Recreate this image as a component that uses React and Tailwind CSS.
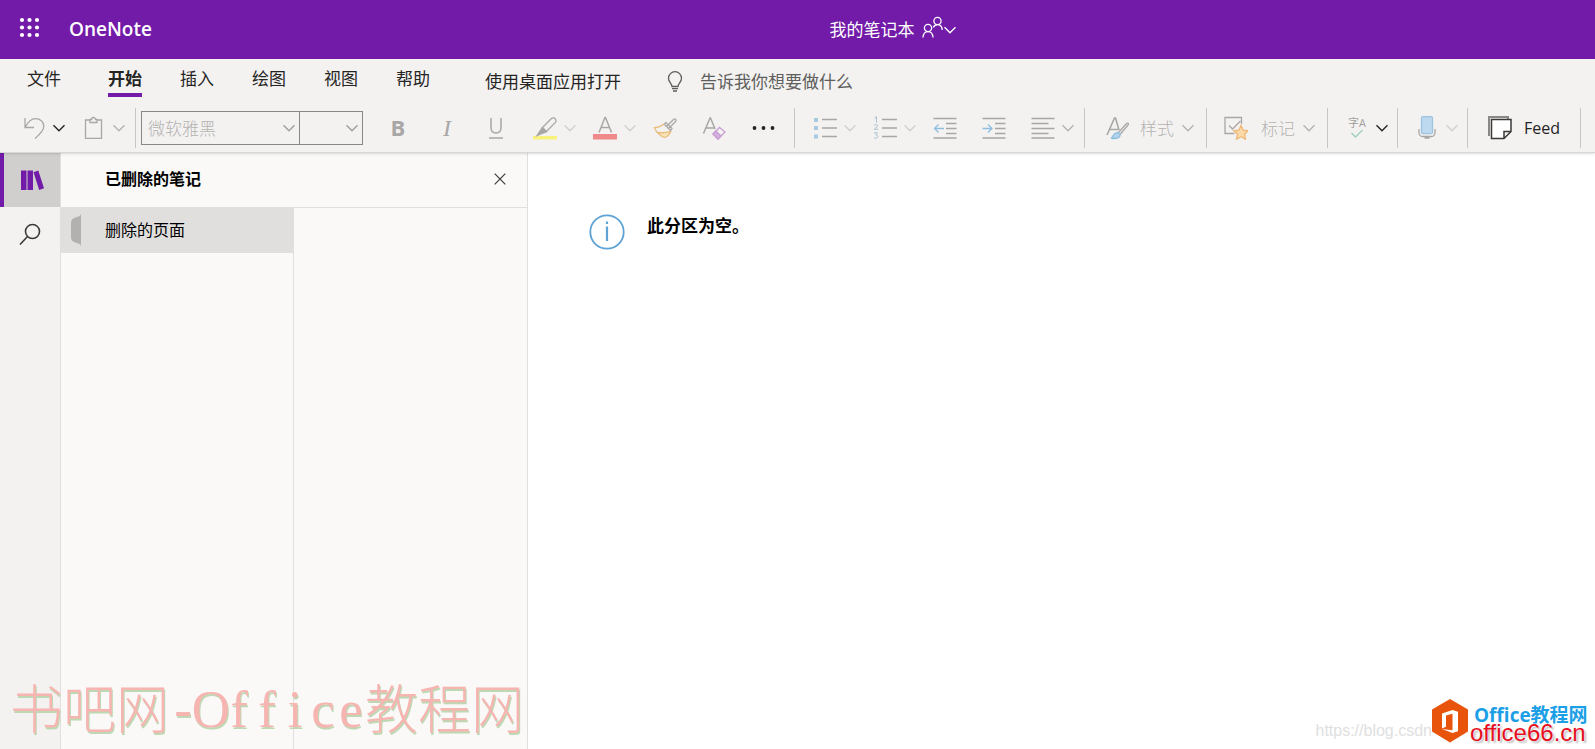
import React from 'react';

const Chevron = ({ className = 'text-[#b5b3b1]' }) => (
  <svg viewBox="0 0 12 12" className={`w-3 h-3 shrink-0 ${className}`} fill="none" stroke="currentColor" strokeWidth="1.4">
    <path d="M0.5 3.2 6 8.7 11.5 3.2" />
  </svg>
);

const Icon = ({ children, className = 'text-[#a9a7a5]' }) => (
  <svg viewBox="0 0 24 24" className={`w-6 h-6 shrink-0 ${className}`} fill="none" stroke="currentColor" strokeWidth="1.3">
    {children}
  </svg>
);

const Tool = ({ label, chevron, chevronClass, children }) => (
  <button type="button" aria-label={label} className={`flex items-center gap-[7px] h-10 ${chevron ? '-mr-2' : ''}`}>
    {children}
    {chevron && <Chevron className={chevronClass} />}
  </button>
);

const Divider = () => <div className="w-px h-10 bg-[#c8c6c4] shrink-0" />;

const Combo = ({ label, value, className }) => (
  <div className={`relative ${className}`}>
    <select aria-label={label} className="appearance-none w-full h-full pl-1.5 pt-0.5 text-[17px] font-light text-[#b5b3b1] outline-none">
      <option>{value}</option>
    </select>
    <div className="absolute right-1 top-0 h-full flex items-center pointer-events-none">
      <Chevron className="text-[#a19f9d]" />
    </div>
  </div>
);

const tabs = [
  { name: '开始', active: true },
  { name: '插入' },
  { name: '绘图' },
  { name: '视图' },
  { name: '帮助' },
];

const Header = () => (
  <header className="flex items-center h-[59px] bg-[#731ba9] text-white">
    <div className="w-[52%] flex items-center pl-[19px] gap-7">
      <button type="button" aria-label="应用启动器" className="-mt-1">
        <svg viewBox="0 0 22 22" className="w-[22px] h-[22px]" fill="currentColor">
          {[3, 10.5, 18].map((y) => [3, 10.5, 18].map((x) => <circle key={`${x}-${y}`} cx={x} cy={y} r="2.1" />))}
        </svg>
      </button>
      <span className="text-[19px] font-semibold">OneNote</span>
    </div>
    <button type="button" className="flex items-center text-[17px]">
      我的笔记本
      <svg viewBox="0 0 22 24" className="w-[22px] h-6 ml-2 -mt-1" fill="none" stroke="currentColor" strokeWidth="1.3">
        <circle cx="6" cy="12" r="3.6" />
        <path d="M1 21.500c.2-3.600 2.200-5.900 5-5.900s4.800 2.300 5 5.900" />
        <circle cx="15.500" cy="5" r="3.600" />
        <path d="M11.300 11.500c.8-1.800 2.200-2.900 4.200-2.900 2.700 0 4.500 2.200 4.800 5.400" />
      </svg>
      <Chevron className="text-white" />
    </button>
  </header>
);

const RibbonTabs = () => (
  <nav className="flex items-start pt-1.5 h-11 text-[17px] text-[#252423]">
    <button type="button" className="ml-[27px] mr-[47px] h-7">文件</button>
    <div className="flex gap-[38px]">
      {tabs.map((tab) => (
        <button
          key={tab.name}
          type="button"
          className={tab.active ? 'h-8 font-bold border-b-4 border-[#731ba9]' : 'h-7'}
        >
          {tab.name}
        </button>
      ))}
    </div>
    <button type="button" className="ml-[55px] h-[34px]">使用桌面应用打开</button>
    <label className="flex items-center ml-11 h-[34px] text-[#605e5c]">
      <svg viewBox="0 0 20 24" className="w-5 h-6" fill="none" stroke="currentColor" strokeWidth="1.3">
        <path d="M7 16.500c0-3-3.500-4-3.500-8.300a6.500 6.500 0 0 1 13 0c0 4.300-3.500 5.300-3.500 8.300zM7 18.700h6M8 21h4" />
      </svg>
      <input
        type="text"
        aria-label="告诉我你想要做什么"
        placeholder="告诉我你想要做什么"
        className="ml-[15px] w-48 outline-none placeholder:text-[#605e5c]"
      />
    </label>
  </nav>
);

const Toolbar = () => (
  <div className="flex items-center h-[49px] text-[17px] text-[#b5b3b1]">
    <div className="flex items-center gap-[25px] pl-[22px] pr-[18px]">
      <Tool label="撤消" chevron chevronClass="text-[#252423]">
        <Icon><path d="M3 2v9.500h9M3.200 11.300C6 6 9 2.700 13.500 2.700c4.500 0 8.300 2.800 8.300 7.300 0 4.500-3.500 8-8.800 12.500" /></Icon>
      </Tool>
      <Tool label="粘贴" chevron>
        <Icon><path d="M8 4H3.500v18.300h16V4H15M8 6.500h7V3.500h-1.500a2 2 0 0 0-4 0H8z" /></Icon>
      </Tool>
    </div>
    <Divider />
    <div className="flex ml-[5px] h-[34px] border border-[#8a8886]">
      <Combo label="字体" value="微软雅黑" className="w-[157px]" />
      <Combo label="字号" value="" className="w-[63px] border-l border-[#8a8886]" />
    </div>
    <div className="flex items-center gap-[25px] pl-[23px] pr-[19px]">
      <Tool label="加粗">
        <span className="w-6 text-center text-[22px] leading-6 pb-0.5 font-bold text-[#a9a7a5]">B</span>
      </Tool>
      <Tool label="倾斜">
        <span className="w-6 text-center text-2xl italic font-['Liberation_Serif',serif] text-[#a9a7a5]">I</span>
      </Tool>
      <Tool label="下划线">
        <Icon><path d="M7 2v9.500c0 3.700 1.800 5.500 5 5.500s5-1.800 5-5.500V2M5 22h14" strokeWidth="1.500" /></Icon>
      </Tool>
      <Tool label="突出显示" chevron chevronClass="text-[#d2d0ce]">
        <Icon>
          <path d="M0 20h24v3.500H0z" fill="#f8f27c" stroke="none" />
          <path d="m9.500 11.500 8.700-8.700c1.200-1.200 3-1.200 4 0s1 2.600 0 3.800l-8.800 8.900z" />
          <path d="m9.200 11.700 4 4-3.500 1.500-5.700 2.300z" fill="currentColor" />
        </Icon>
      </Tool>
      <Tool label="字体颜色" chevron chevronClass="text-[#d2d0ce]">
        <Icon>
          <path d="M0 18h24v5.500H0z" fill="#f0898c" stroke="none" />
          <path d="m6 16.500 6-15h.5l6 15M8 11.500h8.500" strokeWidth="1.500" />
        </Icon>
      </Tool>
      <Tool label="格式刷">
        <Icon>
          <path d="m11 8 7 7M13.500 10.500l7-7c1.500-1.500 3.500.5 2 2l-6.800 7M11 8l2-1.500 6 6-1.200 2" />
          <path d="M5 16.500c4 .5 8 .3 12-.8-1 2.500-2.500 4.300-5 5.800-3-.8-5.300-2.500-7-5z" fill="#fbe3b8" stroke="none" />
          <path d="M11 8C8 10.500 5 11.500 1.500 11.700 3.500 16.500 7 20 12 21.500c3-1.500 5-3.500 6-6.500M5 16.500c4 .5 8 .3 12-.8" stroke="#e8bd7c" />
        </Icon>
      </Tool>
      <Tool label="清除格式">
        <Icon>
          <path d="M1.500 17.500 8 2h.5l4.500 11M4 12h8" strokeWidth="1.500" />
          <path d="m11 18 6.500-6.500 5.500 4.500-7 7z" stroke="#c9a0d6" />
          <path d="m11 18 3-3 5 5-3 3z" fill="#d3aedf" stroke="#c9a0d6" />
        </Icon>
      </Tool>
      <Tool label="更多">
        <Icon className="text-[#252423]">
          <g fill="currentColor" stroke="none">
            <circle cx="3.500" cy="12" r="1.900" /><circle cx="12.500" cy="12" r="1.900" /><circle cx="21.500" cy="12" r="1.900" />
          </g>
        </Icon>
      </Tool>
    </div>
    <Divider />
    <div className="flex items-center gap-[25px] pl-[18px] pr-[18px]">
      <Tool label="项目符号" chevron chevronClass="text-[#d2d0ce]">
        <Icon>
          <path d="M9 3.500h15M9 12h15M9 20.500h15" />
          <path d="M1 2h4v4H1zM1 10h4v4H1zM1 18.500h4v4H1z" fill="#a9c9e0" stroke="none" />
        </Icon>
      </Tool>
      <Tool label="编号" chevron chevronClass="text-[#d2d0ce]">
        <Icon>
          <path d="M9 3.500h15M9 12h15M9 20.500h15" />
          <path d="M1.500 2 3.500.7v5.800M1 9.300c1-1.300 4-.8 3.500.7-.3 1-3 2.500-3.300 3.300h4M1 16.800h3.500L2.800 19c3 0 2.600 4-1.800 3" stroke="#a9c0d0" strokeWidth="1" />
        </Icon>
      </Tool>
      <Tool label="减少缩进">
        <Icon>
          <path d="M.5 2.500h23M13 7.500h10.500M13 12.500h10.500M13 17.500h10.500M.5 22h23" />
          <path d="M11 12.500H1.500M5.500 8.500l-4 4 4 4" stroke="#8fbfe0" />
        </Icon>
      </Tool>
      <Tool label="增加缩进">
        <Icon>
          <path d="M.5 2.500h23M13 7.500h10.500M13 12.500h10.500M13 17.500h10.500M.5 22h23" />
          <path d="M.5 12.500H10M6 8.500l4 4-4 4" stroke="#8fbfe0" />
        </Icon>
      </Tool>
      <Tool label="对齐方式" chevron>
        <Icon><path d="M.5 2.500h23M.5 7.500h17M.5 12.500h23M.5 17.500h17M.5 22h23" /></Icon>
      </Tool>
    </div>
    <Divider />
    <button type="button" className="flex items-center pl-5 pr-3">
      <Icon>
        <path d="M2 19 9.500 2h1L14 14M5 13.500h8" strokeWidth="1.600" />
        <path d="m13 17 8.500-9.500c1.500-1 2.500 0 1.500 1.500L15 18.500" />
        <path d="M6 22c2-.5 2-5 6-5.300 3 0 4 2.800 2 4.500-1.500 1.300-5 1.500-8 .8z" fill="#b3d3ea" stroke="#8fbfe0" />
      </Icon>
      <span className="ml-[11px] mr-2 pt-0.5 font-light">样式</span>
      <Chevron />
    </button>
    <Divider />
    <button type="button" className="flex items-center pl-[17px] pr-3">
      <Icon>
        <path d="M17.500 8V1.500H1v16h9.500M5 9.500 8.500 13l8-8" />
        <path d="m17 9.500 2.200 4.700 5 .6-3.700 3.400 1 5-4.500-2.500-4.500 2.500 1-5-3.700-3.400 5-.6z" fill="#fbd9a8" stroke="#f0b878" />
      </Icon>
      <span className="ml-[13px] mr-2 pt-0.5 font-light">标记</span>
      <Chevron />
    </button>
    <Divider />
    <div className="flex px-[17px]">
      <Tool label="拼写检查" chevron chevronClass="text-[#252423]">
        <span className="w-6 flex flex-col items-center">
          <span className="text-[11px] leading-3 text-[#a19f9d] whitespace-nowrap">字A</span>
          <svg viewBox="0 0 12 9" className="w-3 h-[9px]" fill="none" stroke="#9fd0bd" strokeWidth="1.4"><path d="m.5 4 4 4 7-7" /></svg>
        </span>
      </Tool>
    </div>
    <Divider />
    <div className="flex px-[17px]">
      <Tool label="听写" chevron chevronClass="text-[#d2d0ce]">
        <Icon>
          <rect x="6.500" y=".7" width="11" height="17" rx="1.500" fill="#bddaf0" stroke="#9cc3e0" />
          <path d="M4 13v3.500c0 2 1.500 4 3.500 4h9c2 0 3.500-2 3.500-4V13M9.500 22h5" />
        </Icon>
      </Tool>
    </div>
    <Divider />
    <button type="button" className="flex items-center gap-3 px-5 text-base text-[#252423]">
      <Icon className="text-[#3b3a39]">
        <path d="M1 20V1h19v2" stroke="#8a8886" strokeWidth="2" />
        <path d="M3.500 3.500h19.500v12l-7 7H3.500zM23 15.500h-7v7" fill="#fff" strokeWidth="1.500" />
      </Icon>
      Feed
    </button>
    <Divider />
  </div>
);

const Sidebar = () => (
  <aside className="flex">
    <div className="w-[61px] bg-[#f3f2f1] border-r border-[#e1dfdd] text-[#3b3a39]">
      <button type="button" aria-label="笔记本" className="flex items-center w-full h-[54px] pl-4 bg-[#d0cfcd] border-l-4 border-[#731ba9]">
        <svg viewBox="0 0 24 22" className="w-6 h-[22px]" fill="#731ba9">
          <path d="M1 1.500h5.500V21H1zM7.500 1.500H13V21H7.500zM13.500 3.200l4.800-1.700L24 19.200 19.200 21z" />
        </svg>
      </button>
      <button type="button" aria-label="搜索" className="flex items-center justify-center w-full h-[54px]">
        <svg viewBox="0 0 22 22" className="w-[22px] h-[22px]" fill="none" stroke="currentColor" strokeWidth="1.600">
          <circle cx="13.500" cy="8.500" r="7" />
          <path d="m8.500 13.500-7.500 8" />
        </svg>
      </button>
    </div>
    <div className="flex flex-col w-[467px] bg-[#faf9f8] border-r border-[#e1dfdd]">
      <div className="flex items-center justify-between h-[55px] pl-11 pr-[21px] pb-0.5 border-b border-[#e1dfdd]">
        <h2 className="text-base font-bold text-black">已删除的笔记</h2>
        <button type="button" aria-label="关闭">
          <svg viewBox="0 0 12 12" className="w-3 h-3" fill="none" stroke="#3b3a39" strokeWidth="1.200"><path d="m.7.7 10.600 10.600M11.300.7.7 11.300" /></svg>
        </button>
      </div>
      <div className="flex-1 w-[233px] border-r border-[#e1dfdd]">
        <button type="button" className="flex items-center w-full h-[45px] pl-2.5 pb-0.5 bg-[#e1dfdd] text-base text-black">
          <svg viewBox="0 0 10 32" className="w-2.5 h-8 mr-6" fill="#b3b1af">
            <path d="M10 0v32c-1-2-2-2.500-4-3-4-1-6-2.500-6-6V9c0-3.500 2-5 6-6 2-.5 3-1 4-3z" />
          </svg>
          删除的页面
        </button>
      </div>
    </div>
  </aside>
);

const WatermarkLeft = () => (
  <div className="absolute left-2.5 bottom-1.5 flex items-center pointer-events-none text-[53px] leading-[68px] text-[#f7b5b2] font-light [text-shadow:1px_2px_0_#bfd8b4]">
    <span>书吧网</span>
    <span className="flex font-normal font-['Liberation_Serif',serif]">
      {'-Office'.split('').map((c, i) => <span key={i} className="w-7 flex justify-center">{c}</span>)}
    </span>
    <span>教程网</span>
  </div>
);

const WatermarkRight = () => (
  <div className="absolute right-[7px] bottom-0 flex items-end pointer-events-none">
    <span className="pb-1.5 text-base text-[#e0e0e0] font-['Liberation_Sans',sans-serif]">https://blog.csdn</span>
    <svg viewBox="0 0 36 44" className="w-9 h-11 mb-1.5">
      <path d="M18 0 36 10.500v22L18 43.500 0 32.500v-22z" fill="#e8540c" />
      <path d="M10 14.500 20.500 11l5.500 1.700v19.600L20.500 34 10 30l10.500 1.200V14.700L14 16.500v11.200L10 29.500z" fill="#fff" />
    </svg>
    <div className="ml-0.5 pb-2 w-[118px] whitespace-nowrap">
      <p className="pl-1 text-[19px] leading-5 font-bold text-[#1c9fe6]">Office教程网</p>
      <p className="text-2xl leading-4 text-[#e60f1e] font-['Liberation_Sans',sans-serif] [text-shadow:0_0_2px_#fff,2px_2px_2px_#bbb]">office66.cn</p>
    </div>
  </div>
);

function App() {
  return (
    <div className="relative min-h-screen flex flex-col overflow-hidden bg-white font-['Open_Sans','Noto_Sans_CJK_SC',sans-serif]">
      <Header />
      <div className="relative bg-[#f3f2f1] border-b border-[#dad8d6] shadow-sm">
        <RibbonTabs />
        <Toolbar />
      </div>
      <div className="flex flex-1">
        <Sidebar />
        <main className="flex items-start flex-1 pl-[61px] pt-[61px]">
          <svg viewBox="0 0 36 36" className="w-9 h-9" fill="none" stroke="#5ea3d5" strokeWidth="1.800">
            <circle cx="18" cy="18" r="16.700" />
            <path d="M18 12.500V27M18 7.500v2.500" strokeWidth="2.200" />
          </svg>
          <p className="ml-[22px] text-[17px] leading-6 font-bold text-black">此分区为空。</p>
        </main>
      </div>
      <WatermarkLeft />
      <WatermarkRight />
    </div>
  );
}

export default App;
